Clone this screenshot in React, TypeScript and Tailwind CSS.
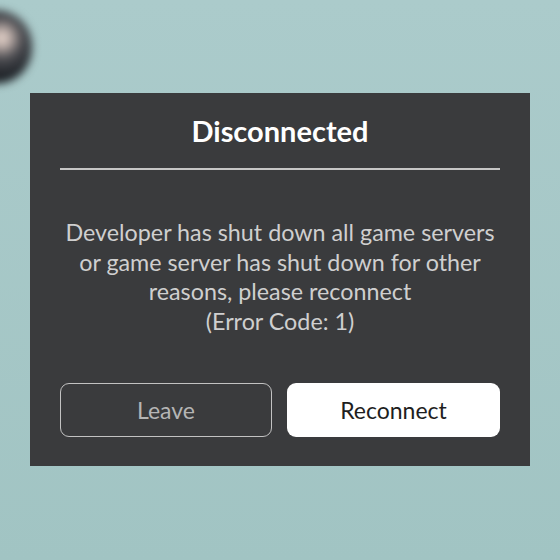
export default function App() {
  return (
    <div className="relative w-[560px] h-[560px] overflow-hidden bg-gradient-to-b from-[#abcbcb] to-[#a1c4c3]" style={{ fontFamily: '"Lato", "Noto Sans", sans-serif' }}>
      <div className="absolute left-[-40px] top-[10px] w-[72px] h-[74px] rounded-full blur-[4px] bg-[radial-gradient(circle_at_58%_38%,#eddcd2_0%,#c4b4ae_12%,#4a4b50_34%,#1e2227_62%,#2c3236_100%)]" />
      <div className="pt-[93px] pl-[30px]">
        <div className="w-[500px] h-[373px] bg-[#3a3b3d] px-[30px] flex flex-col">
          <div className="h-[75px] flex items-center justify-center text-white font-bold text-[29px]">Disconnected</div>
          <div className="h-[2px] bg-[#c6c6c6]" />
          <div className="mt-[48px] text-center text-[#cfcfcf] text-[23.3px] leading-[29.6px]">
            Developer has shut down all game servers
            <br />or game server has shut down for other
            <br />reasons, please reconnect
            <br />(Error Code: 1)
          </div>
          <div className="mt-[47px] flex gap-[15px]">
            <div className="w-[212px] h-[54px] rounded-[9px] border-[1.5px] border-[#c2c2c2] flex items-center justify-center text-[#b5b5b5] text-[23px]">Leave</div>
            <div className="w-[213px] h-[54px] rounded-[9px] bg-white flex items-center justify-center text-[#1e1e1e] text-[23px]">Reconnect</div>
          </div>
        </div>
      </div>
    </div>
  );
}
